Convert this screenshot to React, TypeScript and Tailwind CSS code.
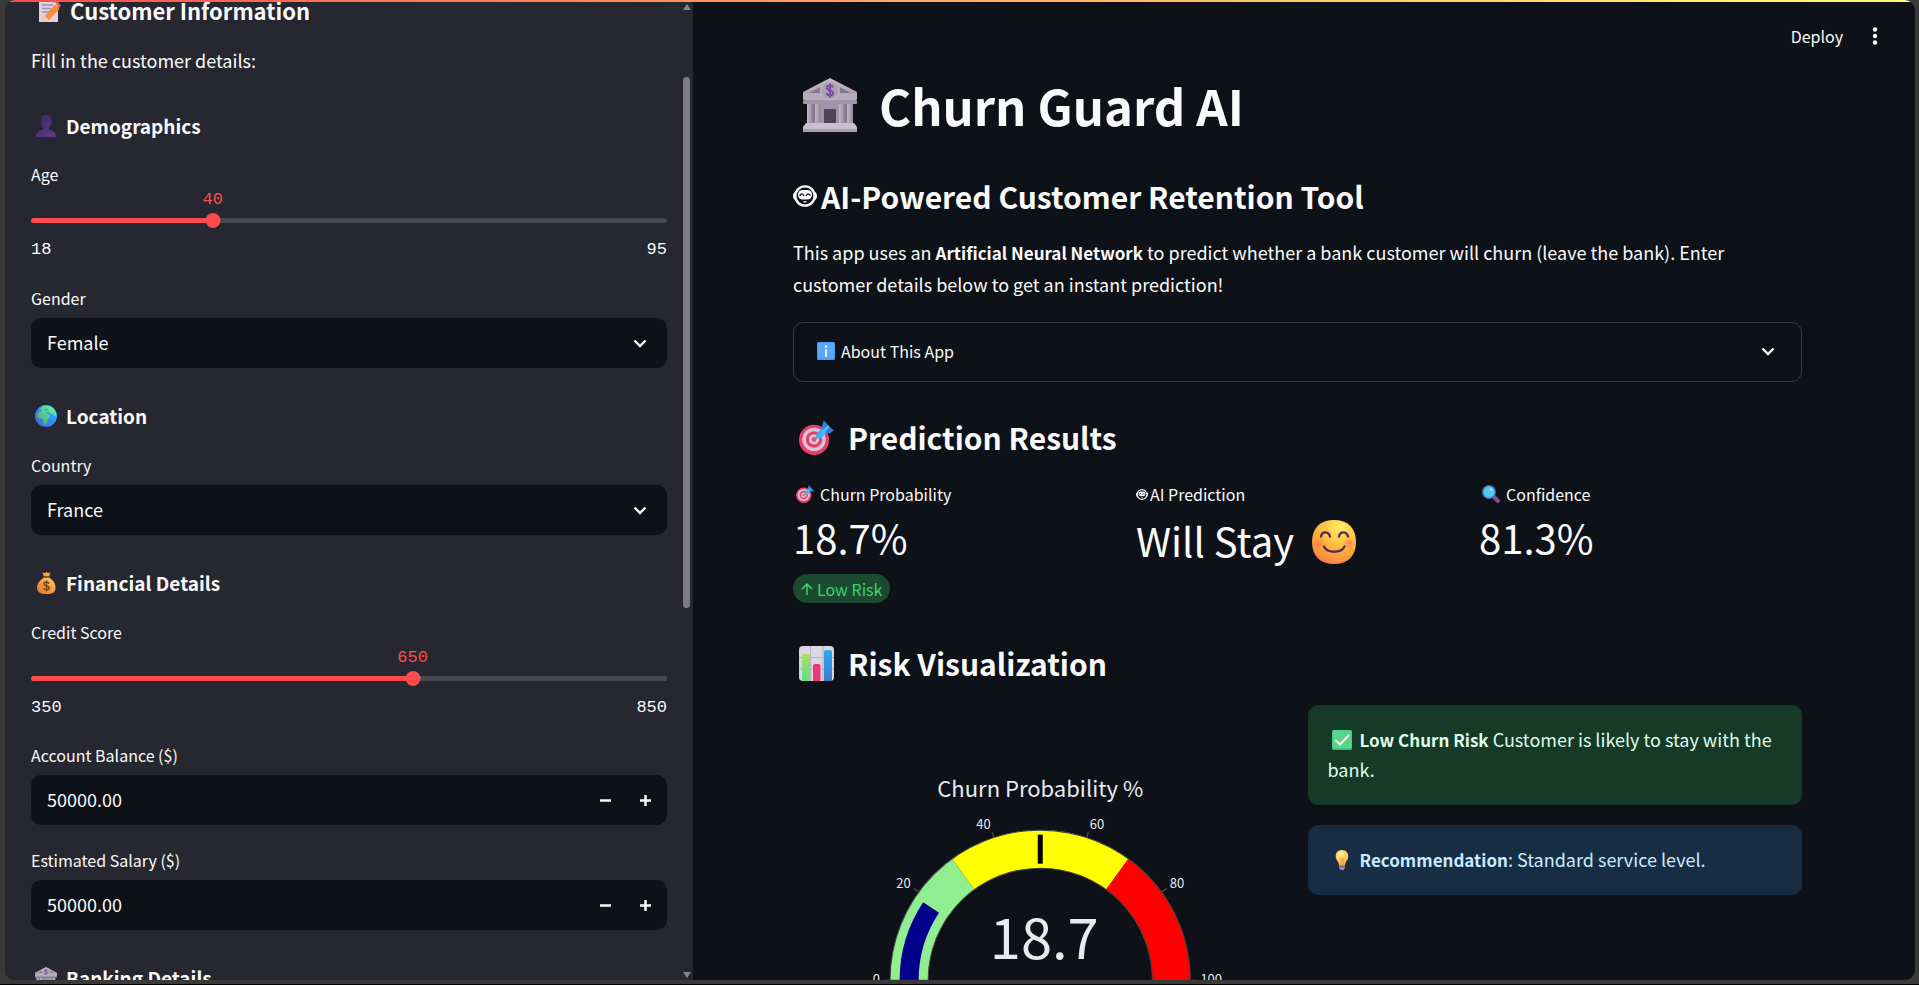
import { useId, useState } from "react";
import type { ReactNode } from "react";

type IconProps = { className?: string };

function Bank({ className = "" }: IconProps) {
  return (
    <svg viewBox="0 0 54 54" className={className} aria-hidden="true">
      <defs>
        <linearGradient id="stone" x1="0" y1="0" x2="0" y2="1">
          <stop offset="0" stopColor="#c6bccb" />
          <stop offset="1" stopColor="#a79cae" />
        </linearGradient>
        <linearGradient id="column" x1="0" y1="0" x2="1" y2="0">
          <stop offset="0" stopColor="#c3bac8" />
          <stop offset="1" stopColor="#8f8597" />
        </linearGradient>
      </defs>
      <rect x="4" y="26" width="46" height="20" fill="#85798c" />
      <path d="M27 0 54 14v4H0v-4z" fill="url(#stone)" />
      <path d="M27 4 48 15H6z" fill="#85798c" />
      <rect x="0" y="15" width="54" height="7" rx="1" fill="#b4aaba" />
      <rect x="0" y="22" width="54" height="4" rx="1" fill="#a095a6" />
      <rect x="4" y="26" width="6" height="20" fill="url(#column)" />
      <rect x="12" y="26" width="6" height="20" fill="url(#column)" />
      <rect x="36" y="26" width="6" height="20" fill="url(#column)" />
      <rect x="44" y="26" width="6" height="20" fill="url(#column)" />
      <rect x="18" y="26" width="18" height="20" fill="#a095a8" />
      <rect x="21" y="31" width="12" height="15" rx="1" fill="#4f4459" />
      <circle cx="27" cy="12.500" r="10" fill="#beb4c4" />
      <circle cx="27" cy="12.500" r="8.500" fill="#aaa0b0" />
      <path
        d="M30 9.500c-.5-1.500-1.600-2-3-2-1.800 0-3 .9-3 2.400 0 3.300 6.200 1.700 6.200 5 0 1.600-1.400 2.400-3.200 2.400-1.600 0-2.900-.7-3.300-2.200M27 5.500v14"
        fill="none"
        stroke="#7a4aa8"
        strokeWidth="2"
      />
      <path d="M3 45h48l3 4v5H0v-5z" fill="#c9c0ce" />
      <path d="M0 51h54v3H0z" fill="#a99fae" />
    </svg>
  );
}

function Memo({ className = "" }: IconProps) {
  return (
    <svg viewBox="0 0 24 24" className={className} aria-hidden="true">
      <path d="M2 0h14l5 5v19H2z" fill="#dcd3e2" />
      <path d="M16 0v5h5z" fill="#b5a9be" />
      <path d="M5 7h11M5 10.500h9M5 14h7" stroke="#9e93aa" strokeWidth="1.500" />
      <path d="M18 6.500 22.500 11 12 22l-5.500 1.500L8 18z" fill="#ff8a3c" />
      <path d="m18.500 5 2-1.500 3.500 4-2 2.800z" fill="#ff5a5f" />
      <path d="m8 18 4 4-5.500 1.500z" fill="#ffd0a0" />
    </svg>
  );
}

function Person({ className = "" }: IconProps) {
  return (
    <svg viewBox="0 0 22 22" className={className} aria-hidden="true">
      <defs>
        <linearGradient id="bust" x1="0" y1="0" x2="1" y2="1">
          <stop offset="0" stopColor="#3c2460" />
          <stop offset="1" stopColor="#613d92" />
        </linearGradient>
      </defs>
      <path
        d="M11 0c4 0 5.500 2.500 5.300 6 .9.200.6 2.800-.5 3-.4 1.900-1.200 3.200-2.300 4v1.500c4 .6 7.500 2.600 7.500 7.500H1c0-4.900 3.500-6.900 7.500-7.500V13c-1.600-1.200-2.700-3.800-2.800-7C5.600 2.500 7 0 11 0z"
        fill="url(#bust)"
      />
    </svg>
  );
}

function Globe({ className = "" }: IconProps) {
  return (
    <svg viewBox="0 0 22 22" className={className} aria-hidden="true">
      <defs>
        <linearGradient id="sea" x1="0" y1="1" x2="1" y2="0">
          <stop offset="0" stopColor="#4a58d8" />
          <stop offset="1" stopColor="#22c0ff" />
        </linearGradient>
        <linearGradient id="land" x1="0" y1="1" x2="1" y2="0">
          <stop offset="0" stopColor="#3f9c86" />
          <stop offset="1" stopColor="#6effa0" />
        </linearGradient>
      </defs>
      <circle cx="11" cy="11" r="11" fill="url(#sea)" />
      <path
        d="M8 1c4-1.600 9.500.5 12 4.500l1.500 4-1.500 2-2-2.500-2 .5-1.500-2-3-.5 1 2 2.500 1-.5 2.500-2 2-.5 3-2 3-1.500-1-.5-4-1-2-3 .2L2.500 11l.5-3 3-1.500 1-2-2-.5z"
        fill="url(#land)"
      />
      <path d="m9 4.500 3-1 1 1.500-2.500.800z" fill="#2f9fe8" />
    </svg>
  );
}

function MoneyBag({ className = "" }: IconProps) {
  return (
    <svg viewBox="0 0 22 22" className={className} aria-hidden="true">
      <defs>
        <linearGradient id="sack" x1="1" y1="0" x2="0" y2="1">
          <stop offset="0" stopColor="#ffd34f" />
          <stop offset="1" stopColor="#e36a35" />
        </linearGradient>
      </defs>
      <path d="M7.500.500 10 1l1.500-1L13 1l2.500-.500L14 4.500H9z" fill="#f7a93b" />
      <path d="M8.500 4h6v1.800h-6z" fill="#9a4a2e" />
      <path
        d="M8.500 5.800h6c3.500 2.200 6 6 6 9.700 0 4.600-2.500 6.500-9 6.500s-9.500-1.900-9.500-6.500c0-3.700 3-7.500 6.500-9.700z"
        fill="url(#sack)"
      />
      <path
        d="M14 11.600c-.4-1-1.300-1.500-2.600-1.500-1.500 0-2.500.7-2.500 1.900 0 2.600 5.300 1.300 5.300 3.900 0 1.300-1.100 2-2.700 2-1.500 0-2.500-.6-2.800-1.800M11.500 8.500v11"
        fill="none"
        stroke="#7a4526"
        strokeWidth="1.500"
      />
    </svg>
  );
}

function Target({ className = "" }: IconProps) {
  return (
    <svg viewBox="0 0 36 36" className={className} aria-hidden="true">
      <circle cx="15.500" cy="20.500" r="15.500" fill="#ea3f6b" />
      <circle cx="15.500" cy="20" r="12" fill="#d5c8dd" />
      <circle cx="15.500" cy="20" r="8.500" fill="#ea3f6b" />
      <circle cx="15.500" cy="20" r="5.200" fill="#d5c8dd" />
      <circle cx="15.500" cy="20" r="2.400" fill="#e0426f" />
      <path d="m15.500 20.500 8-8" stroke="#8b819a" strokeWidth="1.800" strokeLinecap="round" />
      <path d="m17.500 15.500 6-7.500 5 5-6.500 6c-2.500.800-5-1-4.500-3.500z" fill="#41b1ee" />
      <path d="m23 8.500 2.500-8 4 4.500-3.500 6z" fill="#2d86dd" />
      <path d="m27 12.500 4-5.500 5 3.500-4.500 3.500z" fill="#2d7fe0" />
      <path d="m22 13 8-8 1.500 2.500-7.500 8z" fill="#4cc3f5" />
    </svg>
  );
}

function BarChart({ className = "" }: IconProps) {
  return (
    <svg viewBox="0 0 35 35" className={className} aria-hidden="true">
      <defs>
        <linearGradient id="greenBar" x1="0" y1="0" x2="0" y2="1">
          <stop offset="0" stopColor="#a8e05c" />
          <stop offset="1" stopColor="#5fe08a" />
        </linearGradient>
        <linearGradient id="blueBar" x1="0" y1="0" x2="0" y2="1">
          <stop offset="0" stopColor="#2fa9f0" />
          <stop offset="1" stopColor="#3f7bd0" />
        </linearGradient>
      </defs>
      <rect width="35" height="35" rx="4" fill="#dcd5e2" />
      <path d="M11.500 0v35M24 0v35M0 11.500h35M0 23h35" stroke="#b9b0c2" strokeWidth="1" />
      <path d="M3 35V10a2 2 0 0 1 2-2h4a2 2 0 0 1 2 2v25z" fill="url(#greenBar)" />
      <path d="M14 35V20a2 2 0 0 1 2-2h3.500a2 2 0 0 1 2 2v15z" fill="#ea3a76" />
      <path d="M25 35V6a2 2 0 0 1 2-2h4a2 2 0 0 1 2 2v29z" fill="url(#blueBar)" />
    </svg>
  );
}

function Magnifier({ className = "" }: IconProps) {
  return (
    <svg viewBox="0 0 18 18" className={className} aria-hidden="true">
      <path d="m11.500 11.500 4.500 4.500" stroke="#8a4a8c" strokeWidth="4" strokeLinecap="round" />
      <circle cx="7" cy="7" r="7" fill="#3f6fa8" />
      <circle cx="7" cy="7" r="5.700" fill="#55c6ee" />
      <circle cx="9" cy="4.500" r="1.300" fill="#a5e6fa" />
    </svg>
  );
}

function Smile({ className = "" }: IconProps) {
  return (
    <svg viewBox="0 0 44 44" className={className} aria-hidden="true">
      <defs>
        <radialGradient id="face" cx="0.650" cy="0.150" r="0.950">
          <stop offset="0" stopColor="#ffee65" />
          <stop offset="0.550" stopColor="#ffb43c" />
          <stop offset="0.850" stopColor="#fb8c3e" />
          <stop offset="1" stopColor="#ee6f8c" />
        </radialGradient>
        <radialGradient id="blush">
          <stop offset="0" stopColor="#ff6a5e" stopOpacity="0.700" />
          <stop offset="1" stopColor="#ff6a5e" stopOpacity="0" />
        </radialGradient>
      </defs>
      <path d="M22 0c14 0 22 8 22 22s-8 22-22 22S0 36 0 22 8 0 22 0z" fill="url(#face)" />
      <circle cx="7" cy="23" r="6" fill="url(#blush)" />
      <circle cx="37" cy="23" r="6" fill="url(#blush)" />
      <path
        d="M9 16.500c1-5.500 7.500-5.500 9 0M27 16.500c1-5.500 7.500-5.500 9 0M12 26.500c3.500 7 17 7 20.500 0"
        fill="none"
        stroke="#54304e"
        strokeWidth="2.400"
        strokeLinecap="round"
      />
    </svg>
  );
}

function Robot({ className = "" }: IconProps) {
  return (
    <svg viewBox="0 0 24 22" className={className} aria-hidden="true">
      <path d="M3 6.500C.800 7 0 9 0 11s.8 4 3 4.500zM21 6.500c2.200.5 3 2.500 3 4.500s-.8 4-3 4.500z" fill="#fafafa" />
      <circle cx="12" cy="11" r="9.600" fill="#0e1117" stroke="#fafafa" strokeWidth="2.400" />
      <rect x="5" y="5" width="14" height="9.500" rx="4.500" fill="#fafafa" />
      <path
        d="M6.800 11c.5-2.800 3.500-2.800 4 0M13.200 11c.5-2.800 3.500-2.800 4 0"
        fill="none"
        stroke="#0e1117"
        strokeWidth="1.300"
      />
      <path d="M10 16.200h4c-.3 1.900-3.700 1.900-4 0z" fill="#fafafa" />
    </svg>
  );
}

function Info({ className = "" }: IconProps) {
  return (
    <svg viewBox="0 0 18 18" className={className} aria-hidden="true">
      <rect width="18" height="18" rx="1.500" fill="#4a9df3" />
      <rect x="1" y="1" width="16" height="15" rx="1" fill="#58a9f8" />
      <circle cx="9" cy="4.500" r="1.300" fill="#f0ecff" />
      <rect x="8" y="7" width="2" height="8" rx="1" fill="#f0ecff" />
    </svg>
  );
}

function Check({ className = "" }: IconProps) {
  return (
    <svg viewBox="0 0 20 20" className={className} aria-hidden="true">
      <rect width="20" height="20" rx="1.500" fill="#3fb877" />
      <rect x="0.500" width="19" height="18.500" rx="1.500" fill="#56d68d" />
      <path
        d="m4 10.500 4 4 8.500-9"
        fill="none"
        stroke="#f3eff8"
        strokeWidth="2"
        strokeLinecap="round"
        strokeLinejoin="round"
      />
    </svg>
  );
}

function Bulb({ className = "" }: IconProps) {
  return (
    <svg viewBox="0 0 20 20" className={className} aria-hidden="true">
      <defs>
        <radialGradient id="glow" cx="0.400" cy="0.300" r="0.700">
          <stop offset="0" stopColor="#fff0a0" />
          <stop offset="1" stopColor="#fbb13c" />
        </radialGradient>
      </defs>
      <path d="M10 0c4 0 6.300 2.800 6.300 6.300 0 3.700-2.800 5-3.300 8.700H7c-.5-3.700-3.300-5-3.300-8.700C3.700 2.800 6 0 10 0z" fill="url(#glow)" />
      <path d="M8 8c1 1.500 3 1.500 4 0M9 9v6M11 9v6" stroke="#f08a30" strokeWidth=".8" fill="none" />
      <path d="M7 15h6v3l-1.500 2h-3L7 18z" fill="#9b8bb4" />
      <path d="M7 16.800h6" stroke="#6c5a8a" />
    </svg>
  );
}

function Chevron({ className = "" }: IconProps) {
  return (
    <svg viewBox="0 0 14 9" className={className} aria-hidden="true">
      <path d="m1.500 1.500 5.500 5.500 5.500-5.500" fill="none" stroke="#fafafa" strokeWidth="2.400" />
    </svg>
  );
}

function SectionHeading({ icon, children }: { icon: ReactNode; children: ReactNode }) {
  return (
    <h3 className="mt-8 flex h-8 items-center gap-[9px] pl-1 text-[19px] leading-8 font-bold">
      {icon}
      {children}
    </h3>
  );
}

function Slider({ label, min, max, initial }: { label: string; min: number; max: number; initial: number }) {
  const id = useId();
  const [value, setValue] = useState(initial);
  const percent = `${((value - min) / (max - min)) * 100}%`;
  return (
    <div>
      <label htmlFor={id} className="block text-[16px] leading-6">
        {label}
      </label>
      <div className="relative mt-1 h-5 font-['Liberation_Mono',monospace] text-[17px] leading-5 text-[#ff4b4b]">
        <output htmlFor={id} className="absolute -translate-x-1/2" style={{ left: percent }}>
          {value}
        </output>
      </div>
      <div className="relative mt-[3px] flex h-[15px] items-center">
        <div className="h-[5px] w-full overflow-hidden rounded-full bg-[#484954]">
          <div className="h-full bg-[#ff4b4b]" style={{ width: percent }} />
        </div>
        <div className="absolute size-[15px] -translate-x-1/2 rounded-full bg-[#ff4b4b]" style={{ left: percent }} />
        <input
          id={id}
          type="range"
          min={min}
          max={max}
          value={value}
          onChange={(e) => setValue(Number(e.target.value))}
          className="absolute inset-0 w-full cursor-pointer opacity-0"
        />
      </div>
      <div className="flex justify-between pt-3 pb-0.5 font-['Liberation_Mono',monospace] text-[17px] leading-5">
        <span>{min}</span>
        <span>{max}</span>
      </div>
    </div>
  );
}

function Select({ label, options }: { label: string; options: string[] }) {
  const id = useId();
  return (
    <div>
      <label htmlFor={id} className="block text-[16px] leading-6">
        {label}
      </label>
      <div className="relative mt-2 flex items-center">
        <select
          id={id}
          className="h-[50px] w-full appearance-none rounded-[10px] bg-[#0e1117] px-4 pb-0.5 text-[18px] text-[#fafafa] outline-none"
        >
          {options.map((o) => (
            <option key={o}>{o}</option>
          ))}
        </select>
        <Chevron className="pointer-events-none absolute right-5 w-3.5" />
      </div>
    </div>
  );
}

function NumberInput({ label }: { label: string }) {
  const id = useId();
  const [value, setValue] = useState("50000.00");
  const step = (by: number) => setValue((Number(value) + by).toFixed(2));
  return (
    <div>
      <label htmlFor={id} className="block text-[16px] leading-6">
        {label}
      </label>
      <div className="mt-2 flex h-[50px] overflow-hidden rounded-[10px] bg-[#0e1117] pr-0.5">
        <input
          id={id}
          inputMode="decimal"
          value={value}
          onChange={(e) => setValue(e.target.value)}
          className="min-w-0 flex-1 bg-transparent px-4 pb-0.5 text-[18px] outline-none"
        />
        <button
          type="button"
          aria-label={`Decrease ${label}`}
          onClick={() => step(-1000)}
          className="flex w-10 items-center justify-center"
        >
          <svg viewBox="0 0 11 11" className="size-[11px]">
            <path d="M0 5.500h11" stroke="#fafafa" strokeWidth="2.500" />
          </svg>
        </button>
        <button
          type="button"
          aria-label={`Increase ${label}`}
          onClick={() => step(1000)}
          className="flex w-10 items-center justify-center"
        >
          <svg viewBox="0 0 11 11" className="size-[11px]">
            <path d="M0 5.500h11M5.500 0v11" stroke="#fafafa" strokeWidth="2.500" />
          </svg>
        </button>
      </div>
    </div>
  );
}

function Sidebar() {
  return (
    <aside className="flex w-[688px] shrink-0 bg-[#262730]">
      <div className="flex min-w-0 flex-1 flex-col overflow-hidden pr-[13px] pl-[26px]">
        <h2 className="flex h-5 shrink-0 items-center gap-[9px] pl-1.5 text-[22px] leading-5 font-bold">
          <Memo className="size-6 shrink-0" />
          Customer Information
        </h2>
        <p className="mt-6 mb-0.5 text-[18px] leading-8">Fill in the customer details:</p>
        <SectionHeading icon={<Person className="size-[22px]" />}>Demographics</SectionHeading>
        <div className="mt-5 flex flex-col gap-6">
          <Slider label="Age" min={18} max={95} initial={40} />
          <Select label="Gender" options={["Female", "Male"]} />
        </div>
        <SectionHeading icon={<Globe className="size-[22px]" />}>Location</SectionHeading>
        <div className="mt-[21px]">
          <Select label="Country" options={["France", "Germany", "Spain"]} />
        </div>
        <SectionHeading icon={<MoneyBag className="size-[22px]" />}>Financial Details</SectionHeading>
        <div className="mt-[21px] flex flex-col gap-[23px]">
          <Slider label="Credit Score" min={350} max={850} initial={650} />
          <NumberInput label="Account Balance ($)" />
          <NumberInput label="Estimated Salary ($)" />
        </div>
        <SectionHeading icon={<Bank className="size-[22px]" />}>Banking Details</SectionHeading>
      </div>
      <div className="flex w-[13px] shrink-0 flex-col items-center justify-between pt-1 pb-0.5" aria-hidden="true">
        <svg viewBox="0 0 8 6" className="w-2">
          <path d="M4 0l4 6H0z" fill="#85868c" />
        </svg>
        <div className="flex w-full flex-1 flex-col items-center pt-[67px]">
          <div className="h-[531px] max-h-full w-[7px] rounded-full bg-[#7c7c82]" />
        </div>
        <svg viewBox="0 0 8 6" className="w-2">
          <path d="M0 0h8L4 6z" fill="#85868c" />
        </svg>
      </div>
    </aside>
  );
}

const CX = 247;
const CY = 275;

function polar(radius: number, value: number) {
  const angle = Math.PI * (1 - value / 100);
  return [CX + radius * Math.cos(angle), CY - radius * Math.sin(angle)];
}

function band(outer: number, inner: number, from: number, to: number) {
  const [a, b, c, d] = [polar(outer, from), polar(outer, to), polar(inner, to), polar(inner, from)];
  return `M${a} A${outer} ${outer} 0 0 1 ${b} L${c} A${inner} ${inner} 0 0 0 ${d} Z`;
}

const TICKS = [0, 20, 40, 60, 80, 100];

function Gauge() {
  return (
    <svg viewBox="0 0 494 375" className="w-full" role="img" aria-label="Churn Probability % gauge">
      <text x={CX} y="92" textAnchor="middle" fontSize="22" fill="#e6eaf1">
        Churn Probability %
      </text>
      {TICKS.map((t) => {
        const [x1, y1] = polar(150, t);
        const [x2, y2] = polar(156, t);
        const [tx, ty] = polar(160, t);
        return (
          <g key={t}>
            <path d={`M${x1} ${y1}L${x2} ${y2}`} stroke="#555" />
            <text
              x={tx}
              y={ty + 4 - 3 * Math.sin((Math.PI * t) / 100)}
              textAnchor={t < 50 ? "end" : "start"}
              fontSize="13"
              fill="#e6eaf1"
            >
              {t}
            </text>
          </g>
        );
      })}
      <path d={band(150, 112, 0, 30)} fill="#90ee90" />
      <path d={band(150, 112, 30, 70)} fill="#ffff00" />
      <path d={band(150, 112, 70, 100)} fill="#ff0000" />
      <path d={band(140.5, 121.5, 0, 18.7)} fill="#00008b" />
      <path d={band(150, 112, 0, 100)} fill="none" stroke="#444" />
      <path d={`M${CX} 129.500v29`} stroke="#000" strokeWidth="5" />
      <text x={CX + 4} y="254" textAnchor="middle" fontSize="56" fill="#e6eaf1">
        18.7
      </text>
    </svg>
  );
}

function Main() {
  return (
    <main className="min-w-0 flex-1 overflow-hidden">
      <header className="flex h-[72px] items-center justify-end gap-[23px] pr-[31px]">
        <button type="button" className="text-[16px] leading-6">
          Deploy
        </button>
        <button type="button" aria-label="Main menu" className="flex w-[18px] justify-center">
          <svg viewBox="0 0 6 18" className="h-[18px]">
            <circle cx="3" cy="2.500" r="2.200" fill="#fafafa" />
            <circle cx="3" cy="9" r="2.200" fill="#fafafa" />
            <circle cx="3" cy="15.500" r="2.200" fill="#fafafa" />
          </svg>
        </button>
      </header>
      <div className="pr-[113px] pl-[100px]">
        <h1 className="flex h-[66px] items-center gap-[22px] pl-2.5 text-[49px] leading-[66px] font-bold">
          <Bank className="size-[54px]" />
          Churn Guard AI
        </h1>
        <h2 className="mt-[37px] flex h-[42px] items-center gap-1 text-[30px] leading-[42px] font-bold">
          <Robot className="w-6" />
          AI-Powered Customer Retention Tool
        </h2>
        <p className="mt-[19px] text-[18px] leading-8">
          This app uses an <strong className="text-[17px] leading-none font-bold">Artificial Neural Network</strong> to
          predict whether a bank customer will churn (leave the bank). Enter customer details below to get an instant
          prediction!
        </p>
        <button
          type="button"
          aria-expanded="false"
          className="mt-[22px] flex h-[60px] w-full items-center rounded-[10px] border border-[#3a3b40] pr-[26px] pb-0.5 pl-[23px] text-[16px] leading-6"
        >
          <Info className="mr-1.5 size-[18px]" />
          About This App
          <Chevron className="ml-auto w-3.5" />
        </button>
        <h2 className="mt-[34px] flex h-[42px] items-center gap-3.5 pl-1.5 text-[30px] leading-[42px] font-bold">
          <Target className="size-[35px]" />
          Prediction Results
        </h2>
        <div className="mt-6 grid grid-cols-3 gap-5">
          <div>
            <div className="flex items-center gap-1.5 pl-[3px] text-[16px] leading-6">
              <Target className="size-[18px]" />
              Churn Probability
            </div>
            <div className="mt-1 text-[40px] leading-[54px]">18.7%</div>
            <div className="mt-2.5 inline-flex h-[29px] items-center gap-1 rounded-full bg-[#1c4a30] px-2 text-[16px] text-[#3dd56d]">
              <svg viewBox="0 0 12 12" className="size-3">
                <path d="M6 12V1M1 6l5-5 5 5" fill="none" stroke="currentColor" strokeWidth="1.500" />
              </svg>
              Low Risk
            </div>
          </div>
          <div>
            <div className="flex items-center gap-0.5 text-[16px] leading-6">
              <Robot className="w-3" />
              AI Prediction
            </div>
            <div className="mt-1 flex h-[60px] items-center gap-[18px] text-[40px]">
              Will Stay
              <Smile className="mt-1 size-11" />
            </div>
          </div>
          <div>
            <div className="flex items-center gap-1.5 pl-[3px] text-[16px] leading-6">
              <Magnifier className="size-[18px]" />
              Confidence
            </div>
            <div className="mt-1 text-[40px] leading-[54px]">81.3%</div>
          </div>
        </div>
        <h2 className="mt-[39px] flex h-[42px] items-center gap-3.5 pl-1.5 text-[30px] leading-[42px] font-bold">
          <BarChart className="size-[35px]" />
          Risk Visualization
        </h2>
        <div className="mt-[21px] grid grid-cols-2 items-start gap-5">
          <Gauge />
          <div className="flex flex-col gap-5 text-[18px] leading-[30px]">
            <div className="rounded-[10px] bg-[#173928] px-5 pt-[19px] pb-[21px] text-[#dffde9]">
              <Check className="mr-2 ml-1 inline size-5 align-[-3px]" />
              <strong className="text-[17px] leading-none font-bold">Low Churn Risk</strong> Customer is likely to stay
              with the bank.
            </div>
            <div className="rounded-[10px] bg-[#172d43] px-5 pt-[19px] pb-[21px] text-[#c7ebff]">
              <Bulb className="mr-2 ml-1 inline size-5 align-[-3px]" />
              <strong className="text-[17px] leading-none font-bold">Recommendation</strong>: Standard service level.
            </div>
          </div>
        </div>
      </div>
    </main>
  );
}

export default function App() {
  return (
    <div className="h-screen border-b border-black bg-[#3a3a3a] pr-1 pb-1 pl-[5px] font-['Noto_Sans_CJK_SC','Source_Sans_3',sans-serif] text-[#fafafa]">
      <div className="relative flex h-full overflow-hidden rounded-[10px] bg-[#0e1117]">
        <div className="absolute inset-x-0 top-0 z-10 h-0.5 bg-linear-to-r from-[#ff4b4b] to-[#fffd80]" />
        <Sidebar />
        <Main />
      </div>
    </div>
  );
}
